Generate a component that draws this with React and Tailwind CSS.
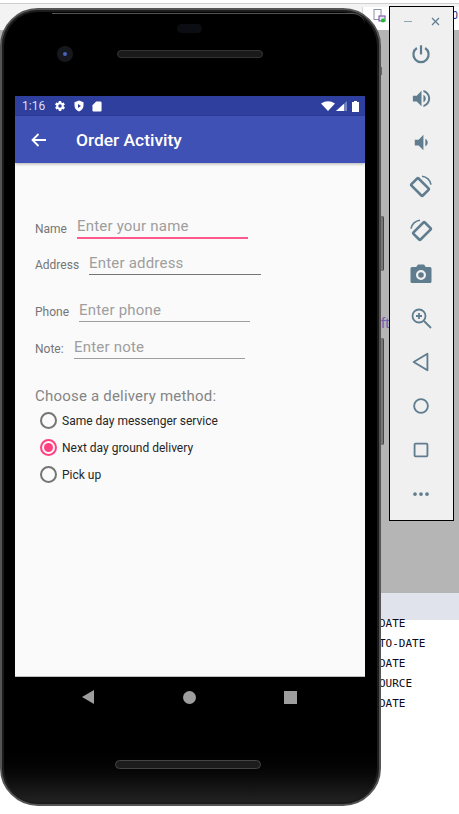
import React from "react";

const ic = "#5f7d8e";

function Icon({ children, w = 24, h = 24 }) {
  return (
    <div className="h-[44px] flex items-center justify-center">
      <svg width={w} height={h} viewBox="0 0 24 24" fill={ic}>{children}</svg>
    </div>
  );
}

function Field({ label, hint, lineClass = "h-px bg-[#9e9e9e]", labelWidth, mt, width = "w-[171px]" }) {
  return (
    <div className={`flex items-end ${mt}`}>
      <span className={`${labelWidth} shrink-0 text-[12px] leading-[14px] text-[#757575] mb-[3px]`}>{label}</span>
      <div className={`${width} flex flex-col`}>
        <span className="text-[15px] leading-[20px] tracking-[0.2px] text-[#9e9e9e] pb-[1px]">{hint}</span>
        <div className={lineClass}></div>
      </div>
    </div>
  );
}

function Radio({ label, checked }) {
  return (
    <div className="flex items-center h-[27px] pl-[5px]">
      <span className={`w-[17px] h-[17px] rounded-full border-2 flex items-center justify-center ${checked ? "border-[#ff4081]" : "border-[#757575]"}`}>
        {checked && <span className="w-[9px] h-[9px] rounded-full bg-[#ff4081]"></span>}
      </span>
      <span className="ml-[5px] text-[12px] text-[#262626]">{label}</span>
    </div>
  );
}

export default function App() {
  return (
    <div className="relative w-[459px] h-[814px] overflow-hidden bg-white" style={{ fontFamily: "Roboto, sans-serif" }}>
      {/* desktop behind the windows */}
      <div className="flex flex-col h-full">
        <div className="h-[27px] bg-[#f3f3f3] border-t border-[#cfcfcf] mt-[3px] flex justify-end items-start">
          <div className="mt-[3px] w-[97px] h-[23px] bg-white border-l border-[#d8d8d8] flex items-start pl-[10px]">
            <svg width="14" height="14" viewBox="0 0 14 14" className="mt-[2px] shrink-0">
              <rect x="1" y="0.5" width="7" height="10" fill="none" stroke="#8a95a8" />
              <rect x="6" y="7" width="6" height="5" fill="#e9e4f2" stroke="#6c4ba0" />
              <circle cx="10" cy="11.5" r="2" fill="#18c21e" />
            </svg>
            <span className="ml-auto text-[11px] leading-[18px] text-[#22307a] pr-px">0</span>
          </div>
        </div>
        <div className="h-[563px] bg-[#b5b5b5] pl-[381px] pt-[281px]">
          <span className="text-[15px] text-[#6a62b5] leading-[18px]" style={{ fontFamily: '"Liberation Sans", sans-serif' }}>ft</span>
        </div>
        <div className="h-[27px] bg-[#e1e3ec]"></div>
        <div className="flex flex-col pl-[379px] text-[11px] leading-[20px] text-[#0a0a20]" style={{ fontFamily: '"DejaVu Sans Mono", monospace' }}>
          <span className="-mt-[6px]">DATE</span>
          <span>TO-DATE</span>
          <span>DATE</span>
          <span>OURCE</span>
          <span>DATE</span>
        </div>
      </div>

      {/* side buttons */}
      <div className="absolute left-[379px] top-[216px] w-[5px] h-[55px] rounded-[2px] bg-[#777777] border-r border-[#444444]"></div>
      <div className="absolute left-[379px] top-[338px] w-[5px] h-[107px] rounded-[2px] bg-[#777777] border-r border-[#444444]"></div>
      <div className="absolute left-[378px] top-[67px] w-[4px] h-[8px] bg-[#666666]"></div>

      {/* phone */}
      <div className="absolute left-0 top-[8px] w-[381px] h-[798px] rounded-[38px] border-[2px] border-[#555555] bg-gradient-to-b from-black from-[92%] to-[#242424] pl-[13px] shadow-[inset_0_0_0_2px_#1c1c1c]">
        <div className="absolute left-[50px] right-[14px] top-[3px] h-[12px] rounded-tr-[30px] border-t border-[#555555]"></div>
        <div className="absolute left-[175px] top-[14px] w-[25px] h-[9px] rounded-full bg-[#0b0d12]"></div>
        <div className="absolute left-[55px] top-[36px] w-[16px] h-[16px] rounded-full bg-[#16181d] flex items-center justify-center">
          <div className="w-[4px] h-[4px] rounded-full bg-[#4a62b8]"></div>
        </div>
        <div className="absolute left-[115px] top-[40px] w-[146px] h-[8px] rounded-full bg-[#1a1a1a] border border-[#333333]"></div>

        <div className="mt-[86px] w-[350px] flex flex-col">
          {/* status bar */}
          <div className="h-[20px] bg-[#2e3f9e] flex items-center pl-[7px] pr-[6px] text-white">
            <span className="text-[12px] w-[32px] text-[#dadff2]">1:16</span>
            <svg width="12" height="12" viewBox="0 0 24 24" fill="white">
              <path d="M19.4 13a7.5 7.5 0 0 0 0-2l2.1-1.6a.5.5 0 0 0 .1-.6l-2-3.5a.5.5 0 0 0-.6-.2l-2.5 1a7 7 0 0 0-1.7-1l-.4-2.6a.5.5 0 0 0-.5-.5h-4a.5.5 0 0 0-.5.4l-.4 2.7a7 7 0 0 0-1.7 1l-2.5-1a.5.5 0 0 0-.6.2l-2 3.5a.5.5 0 0 0 .1.6L4.6 11a7.5 7.5 0 0 0 0 2l-2.1 1.6a.5.5 0 0 0-.1.6l2 3.5a.5.5 0 0 0 .6.2l2.5-1a7 7 0 0 0 1.7 1l.4 2.6a.5.5 0 0 0 .5.5h4a.5.5 0 0 0 .5-.4l.4-2.7a7 7 0 0 0 1.7-1l2.5 1a.5.5 0 0 0 .6-.2l2-3.5a.5.5 0 0 0-.1-.6zM12 15.5a3.5 3.5 0 1 1 0-7 3.5 3.5 0 0 1 0 7z" />
            </svg>
            <svg width="12" height="12" viewBox="0 0 24 24" fill="white" className="ml-[7px]">
              <path fillRule="evenodd" d="M12 1 3 4.5V11c0 5.5 3.8 10.4 9 12 5.2-1.6 9-6.5 9-12V4.5zM10 8l6 4-6 4z" />
            </svg>
            <svg width="10" height="11" viewBox="0 0 22 24" fill="white" className="ml-[7px]">
              <path d="M9 1h9a3 3 0 0 1 3 3v17a2 2 0 0 1-2 2H3a2 2 0 0 1-2-2V9z" />
            </svg>
            <div className="flex-1"></div>
            <svg width="14" height="10" viewBox="0 0 14 10" fill="white"><path d="M0 2.5Q7-2 14 2.5L7 10z" /></svg>
            <svg width="11" height="10" viewBox="0 0 11 10" fill="none" className="ml-[1px]"><path d="M0 10 11 0v10z" fill="white" fillOpacity=".35" /><path d="M0 10 8 2.7V10z" fill="white" /></svg>
            <svg width="7" height="11" viewBox="0 0 7 11" fill="white" className="ml-[5px]"><path d="M2 0h3v1h2v10H0V1h2z" /></svg>
          </div>
          {/* app bar */}
          <div className="h-[47px] bg-[#3f51b5] flex items-center pl-[16px] pt-[1px] shadow-[0_1px_3px_rgba(0,0,0,0.3)] relative">
            <svg width="15" height="14" viewBox="0 0 15 14" fill="none" stroke="white" strokeWidth="1.8">
              <path d="M15 7H1.5M7.5 1 1.5 7l6 6" />
            </svg>
            <span className="ml-[30px] text-[17.4px] font-medium text-white">Order Activity</span>
          </div>
          {/* content */}
          <div className="h-[514px] bg-[#fafafa] pl-[20px] pt-[53px] border-b border-[#bdbdbd]">
            <Field label="Name" hint="Enter your name" labelWidth="w-[42px]" lineClass="h-[2px] bg-[#ff5a8e]" />
            <Field label="Address" hint="Enter address" labelWidth="w-[54px]" lineClass="h-px bg-[#757575]" mt="mt-[14px]" width="w-[172px]" />
            <Field label="Phone" hint="Enter phone" labelWidth="w-[44px]" mt="mt-[25px]" />
            <Field label="Note:" hint="Enter note" labelWidth="w-[39px]" mt="mt-[15px]" />
            <div className="mt-[27px] text-[15px] leading-[20px] tracking-[0.2px] text-[#858585]">Choose a delivery method:</div>
            <div className="flex flex-col mt-[1px]">
              <Radio label="Same day messenger service" />
              <Radio label="Next day ground delivery" checked />
              <Radio label="Pick up" />
            </div>
          </div>
          {/* nav bar */}
          <div className="h-[40px] flex items-center text-[#9e9e9e] pl-[67px]">
            <svg width="12" height="14" viewBox="0 0 12 14" fill="#9e9e9e"><path d="M12 0v14L0 7z" /></svg>
            <div className="ml-[89px] w-[13px] h-[13px] rounded-full bg-[#9e9e9e]"></div>
            <div className="ml-[88px] w-[13px] h-[13px] bg-[#9e9e9e]"></div>
          </div>
        </div>
        <div className="absolute left-[113px] top-[750px] w-[146px] h-[9px] rounded-full bg-[#1c1c1c] border border-[#444444]"></div>
      </div>

      {/* emulator toolbar */}
      <div className="absolute left-[389px] top-[6px] w-[65px] h-[515px] border border-black bg-[#f0f0f0] flex flex-col pr-px">
        <div className="h-[27px] w-full flex items-center justify-between pl-[14px] pr-[12px] pt-[2px]">
          <div className="w-[8px] h-[1.5px] bg-[#8ea3af]"></div>
          <svg width="9" height="9" viewBox="0 0 9 9" stroke={ic} strokeWidth="1.2"><path d="M1 1l7 7M8 1 1 8" /></svg>
        </div>
        <div className="w-full flex flex-col mt-[-2px]">
          <Icon w={22} h={22}>
            <path d="M12 2.5v10" stroke={ic} strokeWidth="2.4" fill="none" />
            <path d="M7.5 5.5a8.3 8.3 0 1 0 9 0" stroke={ic} strokeWidth="2.4" fill="none" />
          </Icon>
          <Icon w={23} h={23}>
            <path d="M3 9v6h4l5 5V4L7 9H3zm13.5 3c0-1.77-1.02-3.29-2.5-4.03v8.05c1.48-.73 2.5-2.25 2.5-4.02zM14 3.23v2.06c2.89.86 5 3.54 5 6.71s-2.11 5.85-5 6.71v2.06c4.01-.91 7-4.49 7-8.77s-2.99-7.86-7-8.77z" />
          </Icon>
          <Icon w={23} h={23}>
            <path d="M18.5 12c0-1.77-1.02-3.29-2.5-4.03v8.05c1.48-.73 2.5-2.25 2.5-4.02zM5 9v6h4l5 5V4L9 9H5z" />
          </Icon>
          <Icon w={24} h={24}>
            <rect x="6" y="5" width="10" height="16" rx="1" transform="rotate(-45 11 13)" fill="none" stroke={ic} strokeWidth="2.6" />
            <path d="M13 2.2a10 10 0 0 1 9 8.5" fill="none" stroke={ic} strokeWidth="1.6" />
          </Icon>
          <Icon w={24} h={24}>
            <rect x="8" y="5" width="10" height="16" rx="1" transform="rotate(45 13 13)" fill="none" stroke={ic} strokeWidth="2.6" />
            <path d="M2 10.7a10 10 0 0 1 9-8.5" fill="none" stroke={ic} strokeWidth="1.6" />
          </Icon>
          <Icon w={24} h={24}>
            <path fillRule="evenodd" d="M9 2.5 7.2 5H3a1.5 1.5 0 0 0-1.5 1.5v13A1.5 1.5 0 0 0 3 21h18a1.5 1.5 0 0 0 1.5-1.5v-13A1.5 1.5 0 0 0 21 5h-4.2L15 2.5zM12 8a5 5 0 1 1 0 10 5 5 0 0 1 0-10zm0 2.2a2.8 2.8 0 1 0 0 5.6 2.8 2.8 0 0 0 0-5.6z" />
          </Icon>
          <Icon w={24} h={24}>
            <circle cx="10" cy="10" r="6.5" fill="none" stroke={ic} strokeWidth="1.8" />
            <path d="M15 15l7 7M10 7v6M7 10h6" fill="none" stroke={ic} strokeWidth="1.8" />
          </Icon>
          <Icon w={22} h={22}>
            <path d="M19 3v18L4 12z" fill="none" stroke={ic} strokeWidth="2" strokeLinejoin="round" />
          </Icon>
          <Icon w={22} h={22}>
            <circle cx="12" cy="12" r="7.5" fill="none" stroke={ic} strokeWidth="2" />
          </Icon>
          <Icon w={22} h={22}>
            <rect x="5" y="5" width="14" height="14" rx="1" fill="none" stroke={ic} strokeWidth="2" />
          </Icon>
          <Icon w={18} h={18}>
            <circle cx="4" cy="12" r="2.5" />
            <circle cx="12" cy="12" r="2.5" />
            <circle cx="20" cy="12" r="2.5" />
          </Icon>
        </div>
      </div>
    </div>
  );
}
